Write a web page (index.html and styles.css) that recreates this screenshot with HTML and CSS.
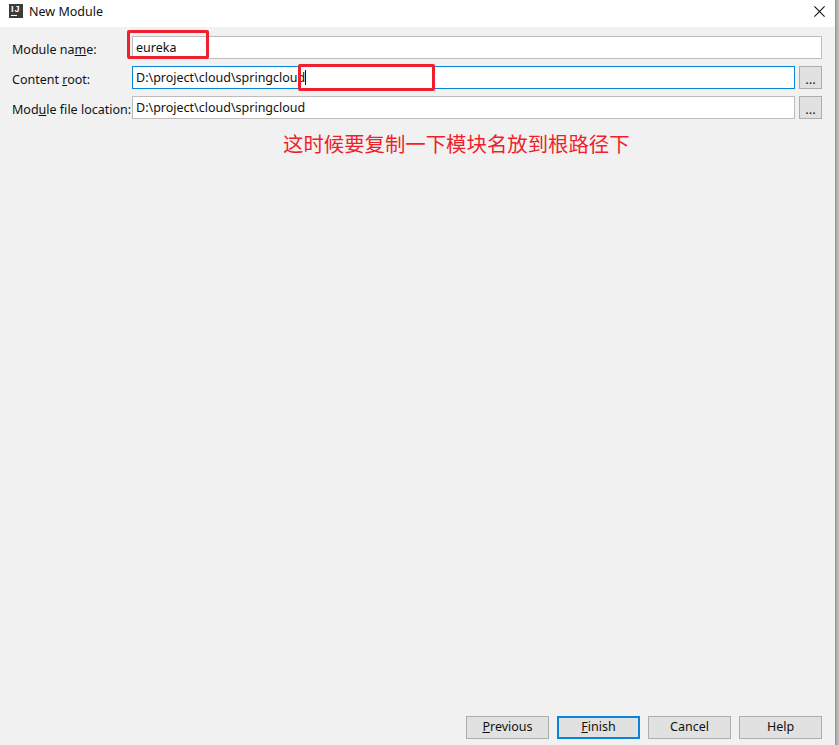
FILE: index.html
```html
<!DOCTYPE html>
<html lang="en">
<head>
<meta charset="utf-8">
<title>New Module</title>
<link rel="stylesheet" href="styles.css">
</head>
<body>
<div class="window">
  <header class="titlebar">
    <div class="app-icon"><span class="app-letters">IJ</span><span class="app-line"></span></div>
    <span class="title">New Module</span>
    <svg class="close" width="11" height="11" viewBox="0 0 11 11"><path d="M.4.4l10.2 10.2M10.6.4L.4 10.6" stroke="#111" stroke-width="1.1" fill="none"/></svg>
  </header>
  <main class="content">
    <div class="form">
      <label class="label"><span>Module na<u>m</u>e:</span></label>
      <div class="field wide">eureka</div>
      <label class="label"><span>Content <u>r</u>oot:</span></label>
      <div class="field focused">D:\project\cloud\springcloud<span class="caret"></span></div>
      <button class="browse">...</button>
      <label class="label"><span>Mod<u>u</u>le file location:</span></label>
      <div class="field">D:\project\cloud\springcloud</div>
      <button class="browse">...</button>
    </div>
    <p class="note">这时候要复制一下模块名放到根路径下</p>
    <footer class="actions">
      <button class="btn"><u>P</u>revious</button>
      <button class="btn primary"><u>F</u>inish</button>
      <button class="btn">Cancel</button>
      <button class="btn">Help</button>
    </footer>
  </main>
  <div class="mark mark-name"></div>
  <div class="mark mark-root"></div>
</div>
<div class="edge"></div>
</body>
</html>
```
FILE: styles.css
```css
* { box-sizing: border-box; }
html, body { margin: 0; height: 100%; background: #fff; }
body { display: flex; font-family: "Noto Sans", "Open Sans", sans-serif; font-size: 12.5px; color: #111; overflow: hidden; }
.window { position: relative; flex: none; width: 835px; height: 745px; display: flex; flex-direction: column; }
.edge { flex: 1; background: linear-gradient(to right, #8c8c8c, #a8a8a8 30%, #c4c4c4); }
.titlebar { height: 27px; flex: none; display: flex; align-items: center; padding: 0 10px 0 9px; background: #fff; }
.app-icon { width: 14px; height: 14px; background: #3c3c3c; position: relative; margin-top: -5px; }
.app-letters { position: absolute; left: 2px; top: 0; color: #fff; font: bold 9px/10px "Liberation Sans", sans-serif; letter-spacing: 1px; }
.app-line { position: absolute; left: 2px; bottom: 2px; width: 6px; height: 1px; background: #fff; }
.title { margin-left: 6px; margin-top: -5px; font-size: 12.5px; }
.close { margin-left: auto; margin-top: -5px; }
.content { flex: 1; background: #f1f1f1; display: flex; flex-direction: column; padding: 9px 13px 6px 12px; }
.form { display: grid; grid-template-columns: 120px 1fr 23px; grid-auto-rows: 23px; column-gap: 0; row-gap: 7px; }
.label { display: flex; align-items: center; padding-top: 4px; white-space: nowrap; }
.field { height: 23px; background: #fff; border: 1px solid #bcbcbc; padding: 0 3px; line-height: 22px; white-space: nowrap; grid-column: 2; margin-right: 4px; }
.field.wide { grid-column: 2 / 4; margin-right: 0; }
.field.focused { border-color: #0a84d6; }
.caret { display: inline-block; width: 1px; height: 15px; background: #111; vertical-align: -3px; }
.browse { width: 23px; height: 23px; padding: 2px 0 0; border: 1px solid #adadad; background: #e1e1e1; font: inherit; font-size: 13px; color: #111; }
.note { margin: 12px 0 0 271px; font-family: "Noto Sans CJK SC", sans-serif; font-size: 20.4px; line-height: 24px; color: #f01f2a; white-space: nowrap; }
.actions { margin-top: auto; display: flex; justify-content: flex-end; gap: 8px; }
.btn { width: 83px; height: 23px; padding: 0 0 2px; border: 1px solid #adadad; background: #e1e1e1; font: inherit; color: #111; }
.btn.primary { border: 2px solid #0a84d6; }
.mark { position: absolute; border: 3px solid #ee2030; border-radius: 2px; }
.mark-name { left: 127px; top: 30px; width: 82px; height: 29px; }
.mark-root { left: 298px; top: 64px; width: 137px; height: 27px; }
```
